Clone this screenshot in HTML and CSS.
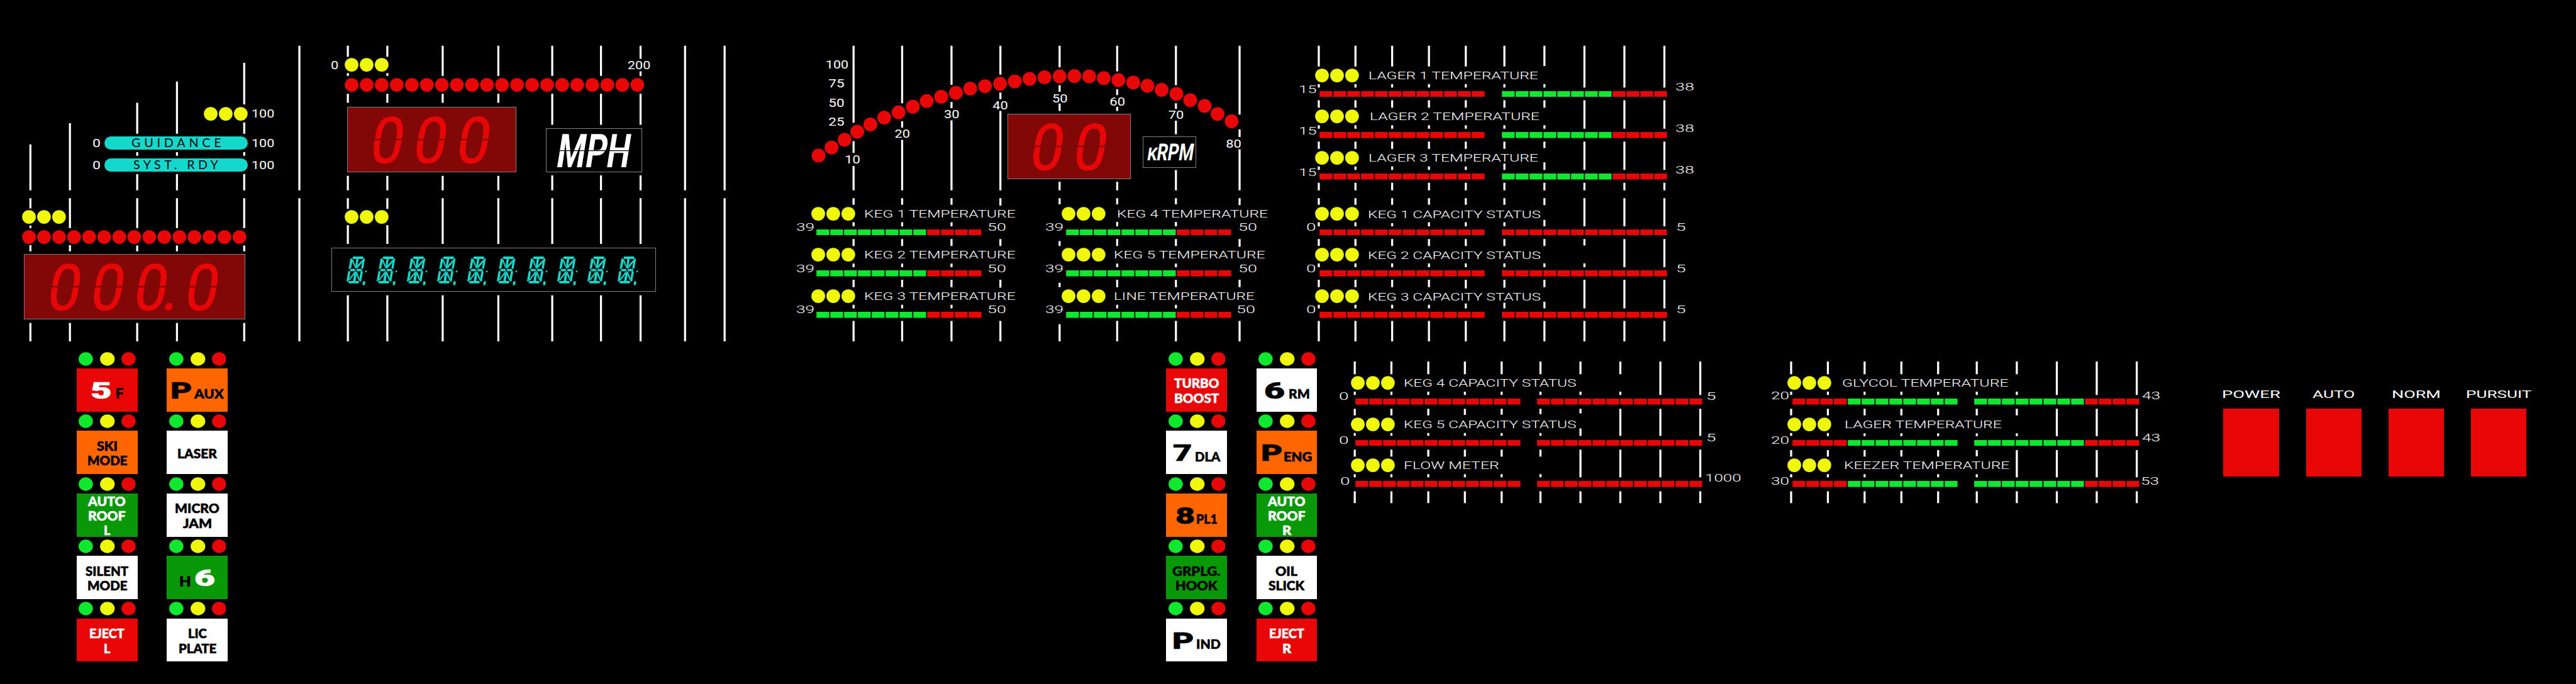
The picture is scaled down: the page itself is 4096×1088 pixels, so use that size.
FILE: index.html
```html
<!DOCTYPE html>
<html lang="en">
<head>
<meta charset="utf-8">
<title>Instrument cluster</title>
<link rel="stylesheet" href="styles.css">
</head>
<body>

<!-- Shared lamp rows, segment bars and the starburst cell -->
<svg class="defs" aria-hidden="true">
  <symbol id="lamps3" viewBox="0 0 108 34"><path class="lamp" d="M17 17H91"/></symbol>
  <symbol id="lamps15" viewBox="0 0 550 34"><path class="lamp" d="M17 17H534"/></symbol>
  <symbol id="lamps20" viewBox="0 0 735 34"><path class="lamp" d="M17 17H718"/></symbol>
  <symbol id="bar-red" viewBox="0 0 406 15"><path class="seg red" d="M0 7.5H406"/></symbol>
  <symbol id="bar-g8r4" viewBox="0 0 406 15"><path class="seg green" d="M0 7.5H270"/><path class="seg red" d="M271.8 7.5H406"/></symbol>
  <symbol id="bar-r4g8" viewBox="0 0 406 15"><path class="seg red" d="M0 7.5H134"/><path class="seg green" d="M135.9 7.5H406"/></symbol>
  <symbol id="tri" viewBox="0 0 140 34">
    <ellipse class="fill-green" cx="17.5" cy="17" rx="17.5" ry="16.5"/>
    <ellipse class="fill-yellow" cx="70.5" cy="17" rx="18" ry="16.5"/>
    <ellipse class="fill-red" cx="122.5" cy="17" rx="17.5" ry="16.5"/>
  </symbol>
  <symbol id="star" viewBox="30 57 153 216">
    <g class="star-bars">
      <path d="M72 66L80 57H150L157 66L150 75H80Z"/>
      <path d="M53 157L61 148H90L97 157L90 166H61Z"/>
      <path d="M101 157L108 148H139L146 157L139 166H108Z"/>
      <path d="M40 246L48 237H117L124 246L117 255H48Z"/>
      <path d="M67 68L76 80L64 140L53 150L46 146L58 76Z"/>
      <path d="M160 68L165 77L154 142L147 150L138 142L149 80Z"/>
      <path d="M49 161L58 170L48 230L36 243L30 236L42 168Z"/>
      <path d="M143 161L150 170L138 236L131 243L122 234L133 170Z"/>
      <path d="M102 76H119L108 132L99 152L94 132Z"/>
      <path d="M97 160L104 182L96 237H77L88 182Z"/>
      <path d="M72 82L79 80L93 120L94 146L73 96Z"/>
      <path d="M150 78L148 97L108 146L104 140L112 120Z"/>
      <path d="M92 166L88 186L50 236L49 222L84 174Z"/>
      <path d="M101 164L108 172L124 216L122 236L104 196Z"/>
      <path d="M165 168L173 159L182 166L173 175Z"/>
      <path d="M150 243L158 237L168 243L165 262L154 272L148 262Z"/>
    </g>
  </symbol>
</svg>

<main class="cluster">
<div class="upper">

  <section class="panel panel-guidance">
    <svg class="scale" viewBox="0 0 780 855"><path d="M74.5 354V466.5M74.5 486V511M74.5 553V559M74.5 601V616M74.5 792V837M171.4 302V466.5M171.4 486V559M171.4 601V616M171.4 792V837M336.2 252V328M336.2 373V382M336.2 427V466.5M336.2 486V559M336.2 602V616M336.2 792V837M433.7 200V328M433.7 373V382M433.7 427V466.5M433.7 486V559M433.7 602V616M433.7 792V837M598.5 154V256M598.5 300V328M598.5 373V382M598.5 427V466.5M598.5 486V559M598.5 602V616M598.5 792V837M733.7 112V466.5M733.7 486V837"/></svg>
    <div class="stack">
      <div class="row guide-lamps"><svg class="lamps3 yellow"><use href="#lamps3"/></svg><svg class="t num" width=".56rem"><text y="100%" textLength="100%" lengthAdjust="spacingAndGlyphs">100</text></svg></div>
      <div class="row guide-1"><svg class="t num" width=".2rem"><text y="100%" textLength="100%" lengthAdjust="spacingAndGlyphs">0</text></svg><div class="pill"><svg class="t geo" width="2.2rem"><text y="100%" textLength="100%">GUIDANCE</text></svg></div><svg class="t num" width=".56rem"><text y="100%" textLength="100%" lengthAdjust="spacingAndGlyphs">100</text></svg></div>
      <div class="row guide-2"><svg class="t num" width=".2rem"><text y="100%" textLength="100%" lengthAdjust="spacingAndGlyphs">0</text></svg><div class="pill"><svg class="t geo" width="2.08rem"><text y="100%" textLength="100%">SYST. RDY</text></svg></div><svg class="t num" width=".56rem"><text y="100%" textLength="100%" lengthAdjust="spacingAndGlyphs">100</text></svg></div>
      <svg class="lamps3 yellow trip-a"><use href="#lamps3"/></svg>
      <svg class="lamps15 red trip-b"><use href="#lamps15"/></svg>
      <svg class="led led4" viewBox="0 0 542 160"><g transform="translate(48 138) skewX(-9)"><text transform="scale(.92 1)" x="0 117.4 234.8 314 374">000.0</text></g><path d="M50 80H500"/></svg>
    </div>
  </section>

  <section class="panel panel-speed">
    <svg class="scale" viewBox="780 0 1120 855"><path d="M852.6 112V139M852.6 179V186M852.6 230V252M852.6 431V466.5M852.6 486V512M852.6 552V598M852.6 724V837M949.4 112V139M949.4 179V186M949.4 230V252M949.4 431V466.5M949.4 486V512M949.4 552V598M949.4 724V837M1085 112V186M1085 230V252M1085 431V466.5M1085 486V598M1085 724V837M1221.4 112V186M1221.4 230V252M1221.4 431V466.5M1221.4 486V598M1221.4 724V837M1353.5 112V186M1353.5 230V306M1353.5 430V466.5M1353.5 486V598M1353.5 724V837M1473 112V186M1473 230V306M1473 430V466.5M1473 486V598M1473 724V837M1570 112V144M1570 175V186M1570 230V306M1570 430V466.5M1570 486V598M1570 724V837M1679 112V466.5M1679 486V837M1776 112V466.5M1776 486V837"/></svg>
    <div class="stack">
      <div class="row speed-top"><svg class="t num" width=".19rem"><text y="100%" textLength="100%" lengthAdjust="spacingAndGlyphs">0</text></svg><svg class="lamps3 yellow"><use href="#lamps3"/></svg><svg class="t num" width=".56rem"><text y="100%" textLength="100%" lengthAdjust="spacingAndGlyphs">200</text></svg></div>
      <svg class="lamps20 red speed-lamps"><use href="#lamps20"/></svg>
      <div class="row speed-read">
        <svg class="led led3" viewBox="0 0 414 160"><g transform="translate(48 138) skewX(-9)"><text transform="scale(.92 1)" x="0 117.4 234.8">000</text></g><path d="M50 80H390"/></svg>
        <svg class="unit mph" viewBox="0 0 236 108"><g transform="translate(20 97) skewX(-9)"><text font-size="118" textLength="184" lengthAdjust="spacingAndGlyphs">MPH</text></g><path d="M20 55H220"/></svg>
      </div>
      <svg class="lamps3 yellow msg-lamps"><use href="#lamps3"/></svg>
      <div class="message">
        <svg><use href="#star"/></svg><svg><use href="#star"/></svg><svg><use href="#star"/></svg><svg><use href="#star"/></svg><svg><use href="#star"/></svg>
        <svg><use href="#star"/></svg><svg><use href="#star"/></svg><svg><use href="#star"/></svg><svg><use href="#star"/></svg><svg><use href="#star"/></svg>
      </div>
    </div>
  </section>

  <section class="panel panel-tach">
    <svg class="scale" viewBox="1900 0 1274 855">
      <path d="M2091.5 112V301M2091.5 346V375M2091.5 407V466.5M2210.5 112V253M2210.5 297V313M2210.5 343V466.5M2331.5 112V208M2331.5 250V265M2331.5 295V466.5M2451.3 112V183M2451.3 227V243M2451.3 272V466.5M2596.4 112V165M2596.4 209V225M2596.4 254V272M2596.4 446V466.5M2737.5 112V175M2737.5 219V233M2737.5 262V272M2737.5 446V466.5M2881.5 112V209M2881.5 253V267M2881.5 296V329M2881.5 417V466.5M3037.5 112V281M3037.5 317V336M3037.5 366V466.5"/>
      <path d="M2091.5 486V502M2091.5 545V555M2091.5 586V603M2091.5 646V655M2091.5 686V704M2091.5 747V756M2091.5 787V837M2210.5 486V502M2210.5 545V555M2210.5 586V603M2210.5 646V655M2210.5 686V704M2210.5 747V756M2210.5 787V837M2331.5 486V502M2331.5 545V555M2331.5 586V603M2331.5 646V655M2331.5 686V704M2331.5 747V756M2331.5 787V837M2451.3 486V504M2451.3 586V603M2451.3 686V705M2451.3 787V837M2596.4 486V501M2596.4 591V603M2596.4 693V704M2596.4 795V837M2737.5 486V501M2737.5 544V555M2737.5 586V603M2737.5 646V655M2737.5 686V704M2737.5 747V756M2737.5 787V837M2881.5 486V501M2881.5 544V555M2881.5 586V603M2881.5 646V655M2881.5 686V704M2881.5 747V756M2881.5 787V837M3037.5 486V503M3037.5 586V605M3037.5 686V704M3037.5 787V837"/>
      <path class="arc" d="M2005.7 381.5h0M2037.6 361.6h0M2069.5 342.7h0M2100.6 322.8h0M2132.6 305.3h0M2166.6 288.4h0M2201.8 275.5h0M2236.6 261.6h0M2270.6 247.6h0M2306.2 237.2h0M2342.3 227.7h0M2377.5 217.3h0M2413.6 211.3h0M2450.5 205.4h0M2486.6 199.4h0M2522.8 193.4h0M2559.4 189.4h0M2596.4 187.4h0M2632.6 186.5h0M2668.8 187.4h0M2704.5 191.4h0M2740.6 196.4h0M2776.8 202.4h0M2811.6 210.3h0M2846.4 220.3h0M2882.6 230.2h0M2916.5 245.6h0M2951.8 259.6h0M2983.5 279.5h0M3017.9 297.4h0"/>
      <g class="dial">
        <text x="2023" y="167.5" textLength="56" lengthAdjust="spacingAndGlyphs">100</text>
        <text x="2030" y="214" textLength="39" lengthAdjust="spacingAndGlyphs">75</text>
        <text x="2030" y="261.5" textLength="39" lengthAdjust="spacingAndGlyphs">50</text>
        <text x="2030" y="309" textLength="39" lengthAdjust="spacingAndGlyphs">25</text>
        <text x="2070" y="401" textLength="38" lengthAdjust="spacingAndGlyphs">10</text>
        <text x="2192" y="338" textLength="38" lengthAdjust="spacingAndGlyphs">20</text>
        <text x="2313" y="289.5" textLength="38" lengthAdjust="spacingAndGlyphs">30</text>
        <text x="2432" y="267.5" textLength="38" lengthAdjust="spacingAndGlyphs">40</text>
        <text x="2578" y="250.5" textLength="38" lengthAdjust="spacingAndGlyphs">50</text>
        <text x="2719" y="258.5" textLength="38" lengthAdjust="spacingAndGlyphs">60</text>
        <text x="2863" y="292" textLength="38" lengthAdjust="spacingAndGlyphs">70</text>
        <text x="3004" y="361.5" textLength="38" lengthAdjust="spacingAndGlyphs">80</text>
      </g>
    </svg>
    <div class="stack">
      <div class="row tach-read">
        <svg class="led led2" viewBox="0 0 302 160"><g transform="translate(48 138) skewX(-9)"><text transform="scale(.92 1)" x="0 117.4">00</text></g><path d="M50 80H290"/></svg>
        <svg class="unit krpm" viewBox="0 0 131 76"><g transform="translate(7 59) skewX(-9)"><text><tspan font-size="46" textLength="25" lengthAdjust="spacingAndGlyphs">K</tspan><tspan x="24" font-size="60" textLength="94" lengthAdjust="spacingAndGlyphs">RPM</tspan></text></g></svg>
      </div>
      <div class="gauge-cols">
        <div class="gauges keg-left">
          <div class="gauge">
            <div class="head"><svg class="lamps3 yellow"><use href="#lamps3"/></svg><svg class="t lbl" width="3.71rem"><text y="100%" textLength="100%" lengthAdjust="spacingAndGlyphs">KEG 1 TEMPERATURE</text></svg></div>
            <div class="track"><div class="min"><svg class="t lim" width=".45rem"><text y="100%" textLength="100%" lengthAdjust="spacingAndGlyphs">39</text></svg></div><svg class="bar"><use href="#bar-g8r4"/></svg><div class="max"><svg class="t lim" width=".46rem"><text y="100%" textLength="100%" lengthAdjust="spacingAndGlyphs">50</text></svg></div></div>
          </div>
          <div class="gauge">
            <div class="head"><svg class="lamps3 yellow"><use href="#lamps3"/></svg><svg class="t lbl" width="3.71rem"><text y="100%" textLength="100%" lengthAdjust="spacingAndGlyphs">KEG 2 TEMPERATURE</text></svg></div>
            <div class="track"><div class="min"><svg class="t lim" width=".45rem"><text y="100%" textLength="100%" lengthAdjust="spacingAndGlyphs">39</text></svg></div><svg class="bar"><use href="#bar-g8r4"/></svg><div class="max"><svg class="t lim" width=".46rem"><text y="100%" textLength="100%" lengthAdjust="spacingAndGlyphs">50</text></svg></div></div>
          </div>
          <div class="gauge">
            <div class="head"><svg class="lamps3 yellow"><use href="#lamps3"/></svg><svg class="t lbl" width="3.71rem"><text y="100%" textLength="100%" lengthAdjust="spacingAndGlyphs">KEG 3 TEMPERATURE</text></svg></div>
            <div class="track"><div class="min"><svg class="t lim" width=".45rem"><text y="100%" textLength="100%" lengthAdjust="spacingAndGlyphs">39</text></svg></div><svg class="bar"><use href="#bar-g8r4"/></svg><div class="max"><svg class="t lim" width=".46rem"><text y="100%" textLength="100%" lengthAdjust="spacingAndGlyphs">50</text></svg></div></div>
          </div>
        </div>
        <div class="gauges keg-right">
          <div class="gauge">
            <div class="head"><svg class="lamps3 yellow"><use href="#lamps3"/></svg><svg class="t lbl" width="3.7rem"><text y="100%" textLength="100%" lengthAdjust="spacingAndGlyphs">KEG 4 TEMPERATURE</text></svg></div>
            <div class="track"><div class="min"><svg class="t lim" width=".45rem"><text y="100%" textLength="100%" lengthAdjust="spacingAndGlyphs">39</text></svg></div><svg class="bar"><use href="#bar-g8r4"/></svg><div class="max"><svg class="t lim" width=".46rem"><text y="100%" textLength="100%" lengthAdjust="spacingAndGlyphs">50</text></svg></div></div>
          </div>
          <div class="gauge">
            <div class="head"><svg class="lamps3 yellow"><use href="#lamps3"/></svg><svg class="t lbl" width="3.71rem"><text y="100%" textLength="100%" lengthAdjust="spacingAndGlyphs">KEG 5 TEMPERATURE</text></svg></div>
            <div class="track"><div class="min"><svg class="t lim" width=".45rem"><text y="100%" textLength="100%" lengthAdjust="spacingAndGlyphs">39</text></svg></div><svg class="bar"><use href="#bar-g8r4"/></svg><div class="max"><svg class="t lim" width=".46rem"><text y="100%" textLength="100%" lengthAdjust="spacingAndGlyphs">50</text></svg></div></div>
          </div>
          <div class="gauge">
            <div class="head"><svg class="lamps3 yellow"><use href="#lamps3"/></svg><svg class="t lbl" width="3.45rem"><text y="100%" textLength="100%" lengthAdjust="spacingAndGlyphs">LINE TEMPERATURE</text></svg></div>
            <div class="track"><div class="min"><svg class="t lim" width=".45rem"><text y="100%" textLength="100%" lengthAdjust="spacingAndGlyphs">39</text></svg></div><svg class="bar"><use href="#bar-g8r4"/></svg><div class="max near"><svg class="t lim" width=".46rem"><text y="100%" textLength="100%" lengthAdjust="spacingAndGlyphs">50</text></svg></div></div>
          </div>
        </div>
      </div>
    </div>
  </section>

  <section class="panel panel-lager">
    <svg class="scale" viewBox="3174 0 1060 855">
      <path d="M3232.5 112V163M3232.5 206V214.5M3232.5 246V264M3232.5 307V315.5M3232.5 347V365M3232.5 408V416.6M3232.5 448V466.5M3322.4 112V163M3322.4 206V214.5M3322.4 246V264M3322.4 307V315.5M3322.4 347V365M3322.4 408V416.6M3322.4 448V466.5M3412.3 112V163M3412.3 206V214.5M3412.3 246V264M3412.3 307V315.5M3412.3 347V365M3412.3 408V416.6M3412.3 448V466.5M3502.5 112V163M3502.5 206V214.5M3502.5 246V264M3502.5 307V315.5M3502.5 347V365M3502.5 408V416.6M3502.5 448V466.5M3592.8 112V163M3592.8 206V214.5M3592.8 246V264M3592.8 307V315.5M3592.8 347V365M3592.8 408V416.6M3592.8 448V466.5M3687.4 112V163M3687.4 206V214.5M3687.4 246V264M3687.4 307V315.5M3687.4 347V365M3687.4 401V416.6M3687.4 448V466.5M3785.5 112V162M3785.5 206V214.5M3785.5 246V264M3785.5 307V315.5M3785.5 347V363M3785.5 398V416.6M3785.5 448V466.5M3883.5 112V214.5M3883.5 246V315.5M3883.5 347V416.6M3883.5 448V466.5M3981.5 112V214.5M3981.5 246V315.5M3981.5 347V416.6M3981.5 448V466.5M4079.5 112V214.5M4079.5 246V315.5M4079.5 347V416.6M4079.5 448V466.5"/>
      <path d="M3232.5 486V502M3232.5 545V555M3232.5 586V603M3232.5 646V655M3232.5 686V704M3232.5 747V756M3232.5 787V837M3322.4 486V502M3322.4 545V555M3322.4 586V603M3322.4 646V655M3322.4 686V704M3322.4 747V756M3322.4 787V837M3412.3 486V502M3412.3 547V555M3412.3 586V603M3412.3 646V655M3412.3 686V704M3412.3 747V756M3412.3 787V837M3502.5 486V502M3502.5 545V555M3502.5 586V603M3502.5 646V655M3502.5 686V704M3502.5 747V756M3502.5 787V837M3592.8 486V502M3592.8 545V555M3592.8 586V603M3592.8 646V655M3592.8 686V707M3592.8 744V756M3592.8 787V837M3687.4 486V502M3687.4 545V555M3687.4 586V603M3687.4 646V655M3687.4 686V705M3687.4 742V756M3687.4 787V837M3785.5 486V503M3785.5 539V555M3785.5 586V603M3785.5 646V655M3785.5 686V704M3785.5 740V756M3785.5 787V837M3883.5 486V555M3883.5 586V602M3883.5 646V655M3883.5 686V756M3883.5 787V837M3981.5 486V555M3981.5 586V655M3981.5 686V756M3981.5 787V837M4079.5 486V555M4079.5 586V655M4079.5 686V756M4079.5 787V837"/>
    </svg>
    <div class="stack">
      <div class="gauges lager">
        <div class="gauge">
          <div class="head"><svg class="lamps3 yellow"><use href="#lamps3"/></svg><svg class="t lbl" width="4.16rem"><text y="100%" textLength="100%" lengthAdjust="spacingAndGlyphs">LAGER 1 TEMPERATURE</text></svg></div>
          <div class="track"><div class="min"><svg class="t lim" width=".44rem"><text y="100%" textLength="100%" lengthAdjust="spacingAndGlyphs">15</text></svg></div><svg class="bar"><use href="#bar-red"/></svg><svg class="bar second"><use href="#bar-g8r4"/></svg><div class="max"><svg class="t lim" width=".46rem"><text y="100%" textLength="100%" lengthAdjust="spacingAndGlyphs">38</text></svg></div></div>
        </div>
        <div class="gauge">
          <div class="head"><svg class="lamps3 yellow"><use href="#lamps3"/></svg><svg class="t lbl" width="4.16rem"><text y="100%" textLength="100%" lengthAdjust="spacingAndGlyphs">LAGER 2 TEMPERATURE</text></svg></div>
          <div class="track"><div class="min"><svg class="t lim" width=".44rem"><text y="100%" textLength="100%" lengthAdjust="spacingAndGlyphs">15</text></svg></div><svg class="bar"><use href="#bar-red"/></svg><svg class="bar second"><use href="#bar-g8r4"/></svg><div class="max"><svg class="t lim" width=".46rem"><text y="100%" textLength="100%" lengthAdjust="spacingAndGlyphs">38</text></svg></div></div>
        </div>
        <div class="gauge">
          <div class="head"><svg class="lamps3 yellow"><use href="#lamps3"/></svg><svg class="t lbl" width="4.16rem"><text y="100%" textLength="100%" lengthAdjust="spacingAndGlyphs">LAGER 3 TEMPERATURE</text></svg></div>
          <div class="track"><div class="min"><svg class="t lim" width=".44rem"><text y="100%" textLength="100%" lengthAdjust="spacingAndGlyphs">15</text></svg></div><svg class="bar"><use href="#bar-red"/></svg><svg class="bar second"><use href="#bar-g8r4"/></svg><div class="max"><svg class="t lim" width=".46rem"><text y="100%" textLength="100%" lengthAdjust="spacingAndGlyphs">38</text></svg></div></div>
        </div>
      </div>
      <div class="gauges capacity">
        <div class="gauge">
          <div class="head"><svg class="lamps3 yellow"><use href="#lamps3"/></svg><svg class="t lbl" width="4.24rem"><text y="100%" textLength="100%" lengthAdjust="spacingAndGlyphs">KEG 1 CAPACITY STATUS</text></svg></div>
          <div class="track"><div class="min"><svg class="t lim" width=".24rem"><text y="100%" textLength="100%" lengthAdjust="spacingAndGlyphs">0</text></svg></div><svg class="bar"><use href="#bar-red"/></svg><svg class="bar second"><use href="#bar-red"/></svg><div class="max"><svg class="t lim" width=".24rem"><text y="100%" textLength="100%" lengthAdjust="spacingAndGlyphs">5</text></svg></div></div>
        </div>
        <div class="gauge">
          <div class="head"><svg class="lamps3 yellow"><use href="#lamps3"/></svg><svg class="t lbl" width="4.24rem"><text y="100%" textLength="100%" lengthAdjust="spacingAndGlyphs">KEG 2 CAPACITY STATUS</text></svg></div>
          <div class="track"><div class="min"><svg class="t lim" width=".24rem"><text y="100%" textLength="100%" lengthAdjust="spacingAndGlyphs">0</text></svg></div><svg class="bar"><use href="#bar-red"/></svg><svg class="bar second"><use href="#bar-red"/></svg><div class="max"><svg class="t lim" width=".24rem"><text y="100%" textLength="100%" lengthAdjust="spacingAndGlyphs">5</text></svg></div></div>
        </div>
        <div class="gauge">
          <div class="head"><svg class="lamps3 yellow"><use href="#lamps3"/></svg><svg class="t lbl" width="4.24rem"><text y="100%" textLength="100%" lengthAdjust="spacingAndGlyphs">KEG 3 CAPACITY STATUS</text></svg></div>
          <div class="track"><div class="min"><svg class="t lim" width=".24rem"><text y="100%" textLength="100%" lengthAdjust="spacingAndGlyphs">0</text></svg></div><svg class="bar"><use href="#bar-red"/></svg><svg class="bar second"><use href="#bar-red"/></svg><div class="max"><svg class="t lim" width=".24rem"><text y="100%" textLength="100%" lengthAdjust="spacingAndGlyphs">5</text></svg></div></div>
        </div>
      </div>
    </div>
  </section>
</div>

<div class="lower">

  <section class="pad pad-left">
    <div class="key"><svg class="tri"><use href="#tri"/></svg><div class="tile bg-red"><div class="pair"><svg class="t huge white" width=".52rem"><text y="100%" textLength="100%" lengthAdjust="spacingAndGlyphs">5</text></svg><svg class="t mid gap-10" width=".19rem"><text y="100%" textLength="100%" lengthAdjust="spacingAndGlyphs">F</text></svg></div></div></div>
    <div class="key"><svg class="tri"><use href="#tri"/></svg><div class="tile bg-orange"><div class="pair"><svg class="t huge" width=".53rem"><text y="100%" textLength="100%" lengthAdjust="spacingAndGlyphs">P</text></svg><svg class="t word gap-6" width=".72rem"><text y="100%" textLength="100%" lengthAdjust="spacingAndGlyphs">AUX</text></svg></div></div></div>
    <div class="key"><svg class="tri"><use href="#tri"/></svg><div class="tile bg-orange"><svg class="t word" width=".51rem"><text y="100%" textLength="100%" lengthAdjust="spacingAndGlyphs">SKI</text></svg><svg class="t word" width=".98rem"><text y="100%" textLength="100%" lengthAdjust="spacingAndGlyphs">MODE</text></svg></div></div>
    <div class="key"><svg class="tri"><use href="#tri"/></svg><div class="tile bg-white"><svg class="t word" width=".97rem"><text y="100%" textLength="100%" lengthAdjust="spacingAndGlyphs">LASER</text></svg></div></div>
    <div class="key"><svg class="tri"><use href="#tri"/></svg><div class="tile bg-green white"><svg class="t word" width=".92rem"><text y="100%" textLength="100%" lengthAdjust="spacingAndGlyphs">AUTO</text></svg><svg class="t word" width=".92rem"><text y="100%" textLength="100%" lengthAdjust="spacingAndGlyphs">ROOF</text></svg><svg class="t word" width=".16rem"><text y="100%" textLength="100%" lengthAdjust="spacingAndGlyphs">L</text></svg></div></div>
    <div class="key"><svg class="tri"><use href="#tri"/></svg><div class="tile bg-white"><svg class="t word" width="1.09rem"><text y="100%" textLength="100%" lengthAdjust="spacingAndGlyphs">MICRO</text></svg><svg class="t word" width=".71rem"><text y="100%" textLength="100%" lengthAdjust="spacingAndGlyphs">JAM</text></svg></div></div>
    <div class="key"><svg class="tri"><use href="#tri"/></svg><div class="tile bg-white"><svg class="t word" width="1.05rem"><text y="100%" textLength="100%" lengthAdjust="spacingAndGlyphs">SILENT</text></svg><svg class="t word" width=".98rem"><text y="100%" textLength="100%" lengthAdjust="spacingAndGlyphs">MODE</text></svg></div></div>
    <div class="key"><svg class="tri"><use href="#tri"/></svg><div class="tile bg-green"><div class="pair"><svg class="t mid" width=".29rem"><text y="100%" textLength="100%" lengthAdjust="spacingAndGlyphs">H</text></svg><svg class="t huge white gap-10" width=".51rem"><text y="100%" textLength="100%" lengthAdjust="spacingAndGlyphs">6</text></svg></div></div></div>
    <div class="key"><svg class="tri"><use href="#tri"/></svg><div class="tile bg-red white"><svg class="t word" width=".86rem"><text y="100%" textLength="100%" lengthAdjust="spacingAndGlyphs">EJECT</text></svg><svg class="t word" width=".16rem"><text y="100%" textLength="100%" lengthAdjust="spacingAndGlyphs">L</text></svg></div></div>
    <div class="key"><svg class="tri"><use href="#tri"/></svg><div class="tile bg-white"><svg class="t word" width=".46rem"><text y="100%" textLength="100%" lengthAdjust="spacingAndGlyphs">LIC</text></svg><svg class="t word" width=".93rem"><text y="100%" textLength="100%" lengthAdjust="spacingAndGlyphs">PLATE</text></svg></div></div>
  </section>

  <section class="pad pad-right">
    <div class="key"><svg class="tri"><use href="#tri"/></svg><div class="tile bg-red white"><svg class="t word" width="1.1rem"><text y="100%" textLength="100%" lengthAdjust="spacingAndGlyphs">TURBO</text></svg><svg class="t word" width="1.1rem"><text y="100%" textLength="100%" lengthAdjust="spacingAndGlyphs">BOOST</text></svg></div></div>
    <div class="key"><svg class="tri"><use href="#tri"/></svg><div class="tile bg-white"><div class="pair"><svg class="t huge" width=".51rem"><text y="100%" textLength="100%" lengthAdjust="spacingAndGlyphs">6</text></svg><svg class="t word gap-10" width=".52rem"><text y="100%" textLength="100%" lengthAdjust="spacingAndGlyphs">RM</text></svg></div></div></div>
    <div class="key"><svg class="tri"><use href="#tri"/></svg><div class="tile bg-white"><div class="pair"><svg class="t huge" width=".47rem"><text y="100%" textLength="100%" lengthAdjust="spacingAndGlyphs">7</text></svg><svg class="t word gap-6" width=".62rem"><text y="100%" textLength="100%" lengthAdjust="spacingAndGlyphs">DLA</text></svg></div></div></div>
    <div class="key"><svg class="tri"><use href="#tri"/></svg><div class="tile bg-orange"><div class="pair"><svg class="t huge" width=".53rem"><text y="100%" textLength="100%" lengthAdjust="spacingAndGlyphs">P</text></svg><svg class="t word gap-3" width=".7rem"><text y="100%" textLength="100%" lengthAdjust="spacingAndGlyphs">ENG</text></svg></div></div></div>
    <div class="key"><svg class="tri"><use href="#tri"/></svg><div class="tile bg-orange"><div class="pair"><svg class="t huge" width=".48rem"><text y="100%" textLength="100%" lengthAdjust="spacingAndGlyphs">8</text></svg><svg class="t word gap-3" width=".52rem"><text y="100%" textLength="100%" lengthAdjust="spacingAndGlyphs">PL1</text></svg></div></div></div>
    <div class="key"><svg class="tri"><use href="#tri"/></svg><div class="tile bg-green white"><svg class="t word" width=".92rem"><text y="100%" textLength="100%" lengthAdjust="spacingAndGlyphs">AUTO</text></svg><svg class="t word" width=".92rem"><text y="100%" textLength="100%" lengthAdjust="spacingAndGlyphs">ROOF</text></svg><svg class="t word" width=".22rem"><text y="100%" textLength="100%" lengthAdjust="spacingAndGlyphs">R</text></svg></div></div>
    <div class="key"><svg class="tri"><use href="#tri"/></svg><div class="tile bg-green"><svg class="t word" width="1.18rem"><text y="100%" textLength="100%" lengthAdjust="spacingAndGlyphs">GRPLG.</text></svg><svg class="t word" width="1.03rem"><text y="100%" textLength="100%" lengthAdjust="spacingAndGlyphs">HOOK</text></svg></div></div>
    <div class="key"><svg class="tri"><use href="#tri"/></svg><div class="tile bg-white"><svg class="t word" width=".54rem"><text y="100%" textLength="100%" lengthAdjust="spacingAndGlyphs">OIL</text></svg><svg class="t word" width=".88rem"><text y="100%" textLength="100%" lengthAdjust="spacingAndGlyphs">SLICK</text></svg></div></div>
    <div class="key"><svg class="tri"><use href="#tri"/></svg><div class="tile bg-white"><div class="pair"><svg class="t huge" width=".53rem"><text y="100%" textLength="100%" lengthAdjust="spacingAndGlyphs">P</text></svg><svg class="t word gap-6" width=".6rem"><text y="100%" textLength="100%" lengthAdjust="spacingAndGlyphs">IND</text></svg></div></div></div>
    <div class="key"><svg class="tri"><use href="#tri"/></svg><div class="tile bg-red white"><svg class="t word" width=".86rem"><text y="100%" textLength="100%" lengthAdjust="spacingAndGlyphs">EJECT</text></svg><svg class="t word" width=".22rem"><text y="100%" textLength="100%" lengthAdjust="spacingAndGlyphs">R</text></svg></div></div>
  </section>

  <section class="panel panel-flow">
    <svg class="scale" viewBox="3250 855 1050 400"><path d="M3319.6 886V917M3319.6 960V968M3319.6 1002V1018M3319.6 1061V1068M3319.6 1102V1119M3319.6 1162V1170M3319.6 1204V1233M3409.4 886V917M3409.4 960V968M3409.4 1002V1018M3409.4 1061V1068M3409.4 1102V1119M3409.4 1162V1170M3409.4 1204V1233M3499.8 886V917M3499.8 960V968M3499.8 1002V1018M3499.8 1061V1068M3499.8 1102V1119M3499.8 1162V1170M3499.8 1204V1233M3589.5 886V917M3589.5 960V968M3589.5 1002V1017M3589.5 1061V1068M3589.5 1102V1119M3589.5 1162V1170M3589.5 1204V1233M3679.6 886V917M3679.6 960V968M3679.6 1002V1016M3679.6 1061V1068M3679.6 1102V1119M3679.6 1162V1170M3679.6 1204V1233M3774.7 886V917M3774.7 960V968M3774.7 1002V1015M3774.7 1061V1068M3774.7 1102V1119M3774.7 1162V1170M3774.7 1204V1233M3872.8 886V917M3872.8 960V968M3872.8 1002V1013M3872.8 1050V1068M3872.8 1102V1170M3872.8 1204V1233M3970.5 886V917M3970.5 960V968M3970.5 1002V1068M3970.5 1102V1170M3970.5 1204V1233M4068.6 886V968M4068.6 1002V1068M4068.6 1102V1170M4068.6 1204V1233M4166.4 886V968M4166.4 1002V1068M4166.4 1102V1170M4166.4 1204V1233"/></svg>
    <div class="stack">
      <div class="gauges flow">
        <div class="gauge">
          <div class="head"><svg class="lamps3 yellow"><use href="#lamps3"/></svg><svg class="t lbl" width="4.23rem"><text y="100%" textLength="100%" lengthAdjust="spacingAndGlyphs">KEG 4 CAPACITY STATUS</text></svg></div>
          <div class="track"><div class="min"><svg class="t lim" width=".24rem"><text y="100%" textLength="100%" lengthAdjust="spacingAndGlyphs">0</text></svg></div><svg class="bar"><use href="#bar-red"/></svg><svg class="bar second"><use href="#bar-red"/></svg><div class="max"><svg class="t lim" width=".24rem"><text y="100%" textLength="100%" lengthAdjust="spacingAndGlyphs">5</text></svg></div></div>
        </div>
        <div class="gauge">
          <div class="head"><svg class="lamps3 yellow"><use href="#lamps3"/></svg><svg class="t lbl" width="4.23rem"><text y="100%" textLength="100%" lengthAdjust="spacingAndGlyphs">KEG 5 CAPACITY STATUS</text></svg></div>
          <div class="track"><div class="min low"><svg class="t lim" width=".24rem"><text y="100%" textLength="100%" lengthAdjust="spacingAndGlyphs">0</text></svg></div><svg class="bar"><use href="#bar-red"/></svg><svg class="bar second"><use href="#bar-red"/></svg><div class="max"><svg class="t lim" width=".24rem"><text y="100%" textLength="100%" lengthAdjust="spacingAndGlyphs">5</text></svg></div></div>
        </div>
        <div class="gauge">
          <div class="head"><svg class="lamps3 yellow"><use href="#lamps3"/></svg><svg class="t lbl" width="2.34rem"><text y="100%" textLength="100%" lengthAdjust="spacingAndGlyphs">FLOW METER</text></svg></div>
          <div class="track"><div class="min low near"><svg class="t lim" width=".24rem"><text y="100%" textLength="100%" lengthAdjust="spacingAndGlyphs">0</text></svg></div><svg class="bar"><use href="#bar-red"/></svg><svg class="bar second"><use href="#bar-red"/></svg><div class="max high near"><svg class="t lim" width=".89rem"><text y="100%" textLength="100%" lengthAdjust="spacingAndGlyphs">1000</text></svg></div></div>
        </div>
      </div>
    </div>
  </section>

  <section class="panel panel-glycol">
    <svg class="scale" viewBox="4300 855 1050 400"><path d="M4389.4 886V917M4389.4 960V968M4389.4 1002V1018M4389.4 1061V1068M4389.4 1103V1119M4389.4 1162V1170M4389.4 1204V1233M4479.5 886V917M4479.5 960V968M4479.5 1002V1018M4479.5 1061V1069M4479.5 1103V1119M4479.5 1162V1170M4479.5 1204V1233M4569.5 886V917M4569.5 960V968M4569.5 1002V1018M4569.5 1062V1069M4569.5 1103V1119M4569.5 1162V1170M4569.5 1204V1233M4659.6 886V917M4659.6 960V968M4659.6 1002V1018M4659.6 1062V1069M4659.6 1103V1119M4659.6 1162V1170M4659.6 1204V1233M4749.7 886V917M4749.7 960V968M4749.7 1002V1018M4749.7 1062V1069M4749.7 1103V1119M4749.7 1162V1170M4749.7 1204V1233M4844.4 886V917M4844.4 960V968M4844.4 1002V1018M4844.4 1062V1069M4844.4 1103V1118M4844.4 1162V1170M4844.4 1204V1233M4942.5 886V917M4942.5 960V968M4942.5 1002V1018M4942.5 1062V1069M4942.5 1103V1170M4942.5 1204V1233M5040.6 886V968M5040.6 1002V1069M5040.6 1103V1170M5040.6 1204V1233M5138.4 886V968M5138.4 1002V1069M5138.4 1103V1170M5138.4 1204V1233M5236.5 886V968M5236.5 1002V1069M5236.5 1103V1170M5236.5 1204V1233"/></svg>
    <div class="stack">
      <div class="gauges glycol">
        <div class="gauge">
          <div class="head"><svg class="lamps3 yellow"><use href="#lamps3"/></svg><svg class="t lbl" width="4.08rem"><text y="100%" textLength="100%" lengthAdjust="spacingAndGlyphs">GLYCOL TEMPERATURE</text></svg></div>
          <div class="track"><div class="min high"><svg class="t lim" width=".45rem"><text y="100%" textLength="100%" lengthAdjust="spacingAndGlyphs">20</text></svg></div><svg class="bar"><use href="#bar-r4g8"/></svg><svg class="bar second"><use href="#bar-g8r4"/></svg><div class="max high"><svg class="t lim" width=".45rem"><text y="100%" textLength="100%" lengthAdjust="spacingAndGlyphs">43</text></svg></div></div>
        </div>
        <div class="gauge">
          <div class="head"><svg class="lamps3 yellow"><use href="#lamps3"/></svg><svg class="t lbl" width="3.85rem"><text y="100%" textLength="100%" lengthAdjust="spacingAndGlyphs">LAGER TEMPERATURE</text></svg></div>
          <div class="track"><div class="min low"><svg class="t lim" width=".45rem"><text y="100%" textLength="100%" lengthAdjust="spacingAndGlyphs">20</text></svg></div><svg class="bar"><use href="#bar-r4g8"/></svg><svg class="bar second"><use href="#bar-g8r4"/></svg><div class="max"><svg class="t lim" width=".45rem"><text y="100%" textLength="100%" lengthAdjust="spacingAndGlyphs">43</text></svg></div></div>
        </div>
        <div class="gauge">
          <div class="head"><svg class="lamps3 yellow"><use href="#lamps3"/></svg><svg class="t lbl" width="4.06rem"><text y="100%" textLength="100%" lengthAdjust="spacingAndGlyphs">KEEZER TEMPERATURE</text></svg></div>
          <div class="track"><div class="min low"><svg class="t lim" width=".45rem"><text y="100%" textLength="100%" lengthAdjust="spacingAndGlyphs">30</text></svg></div><svg class="bar"><use href="#bar-r4g8"/></svg><svg class="bar second"><use href="#bar-g8r4"/></svg><div class="max low near"><svg class="t lim" width=".45rem"><text y="100%" textLength="100%" lengthAdjust="spacingAndGlyphs">53</text></svg></div></div>
        </div>
      </div>
    </div>
  </section>

  <section class="modes">
    <div class="mode"><svg class="t name" width="1.43rem"><text y="100%" textLength="100%" lengthAdjust="spacingAndGlyphs">POWER</text></svg><div class="lens"></div></div>
    <div class="mode"><svg class="t name" width="1.04rem"><text y="100%" textLength="100%" lengthAdjust="spacingAndGlyphs">AUTO</text></svg><div class="lens"></div></div>
    <div class="mode"><svg class="t name" width="1.2rem"><text y="100%" textLength="100%" lengthAdjust="spacingAndGlyphs">NORM</text></svg><div class="lens"></div></div>
    <div class="mode"><svg class="t name" width="1.61rem"><text y="100%" textLength="100%" lengthAdjust="spacingAndGlyphs">PURSUIT</text></svg><div class="lens"></div></div>
  </section>
</div>
</main>
</body>
</html>
```

FILE: styles.css
```css
:root {
  --red: #e80707;
  --yellow: #eff70a;
  --green: #0fe82f;
  --cyan: #14d8cc;
  --led: #820808;
  --frame: #808080;
  font-size: calc(100vw / 63.13);
}

* { box-sizing: border-box; }

body {
  margin: 0;
  background: #000;
  color: #fff;
  font-family: Roboto, "Liberation Sans", sans-serif;
  overflow: hidden;
}

svg { display: block; flex: none; fill: currentColor; }
.defs { width: 0; height: 0; position: absolute; }

.red { color: var(--red); }
.yellow { color: var(--yellow); }
.green { color: var(--green); }
.fill-red { fill: var(--red); }
.fill-yellow { fill: var(--yellow); }
.fill-green { fill: var(--green); }

/* Lamps and bar segments are dashed strokes */
.lamp {
  fill: none;
  stroke: currentColor;
  stroke-width: 33.6;
  stroke-linecap: round;
  stroke-dasharray: 0 36.87;
}
.seg {
  fill: none;
  stroke: currentColor;
  stroke-width: 15;
  stroke-dasharray: 31.3 2.67;
}
.lamps3 { width: 1.08rem; height: .34rem; }
.lamps15 { width: 5.5rem; height: .34rem; }
.lamps20 { width: 7.35rem; height: .34rem; }

/* Text fitted to the width of its box; the box is one cap height tall */
.t { overflow: visible; height: .19rem; font-size: .262rem; }
.num { height: .2rem; font-size: .282rem; }
.lbl { height: .185rem; font-size: .26rem; font-weight: 300; }
.lim { height: .185rem; font-size: .26rem; font-weight: 300; }
.geo { height: .22rem; font-size: .305rem; font-family: Lato, sans-serif; }
.word {
  height: .23rem;
  font-size: .32rem;
  font-family: Lato, sans-serif;
  font-weight: 900;
  stroke: currentColor;
  stroke-width: .01rem;
}
.mid { height: .27rem; font-size: .38rem; font-weight: 900; }
.huge { height: .405rem; font-size: .57rem; font-weight: 900; stroke: currentColor; stroke-width: .01rem; }
.name { height: .19rem; font-size: .267rem; }
.white { color: #fff; }

/* Page bands and panels */
.upper { display: flex; height: 8.55rem; }
.lower { display: flex; height: 8.22rem; align-items: flex-start; }
.panel { display: grid; flex: none; }
.scale, .stack { grid-area: 1 / 1; }
.scale path { fill: none; stroke: #fff; stroke-width: 5; }
.stack { display: flex; flex-direction: column; align-items: flex-start; }
.row { display: flex; align-items: center; }

.panel-guidance { width: 7.8rem; }
.panel-guidance .stack { padding-top: 2.62rem; }
.guide-lamps { margin-left: 4.99rem; gap: .09rem; height: .33rem; }
.guide-1, .guide-2 { margin-left: 2.26rem; gap: .1rem; height: .33rem; }
.guide-1 { margin-top: .39rem; }
.guide-2 { margin-top: .21rem; }
.pill {
  display: flex;
  align-items: center;
  justify-content: center;
  width: 3.51rem;
  height: .33rem;
  border-radius: .165rem;
  background: var(--cyan);
  color: #000;
}
.trip-a { margin: .94rem 0 0 .545rem; }
.trip-b { margin: .15rem 0 0 .545rem; }

/* Readouts */
.led {
  height: 1.6rem;
  overflow: visible;
  border: .02rem solid var(--frame);
  background: var(--led);
  color: var(--red);
}
.led text { font-size: 160px; stroke: currentColor; stroke-width: 1.5; }
.led path { fill: none; stroke: var(--led); stroke-width: 4; }
.led4 { width: 5.42rem; margin: .25rem 0 0 .59rem; }
.led3 { width: 4.14rem; }
.led2 { width: 3.02rem; }
.unit { overflow: visible; border: .02rem solid var(--frame); background: #000; font-weight: 700; }
.unit path { fill: none; stroke: #000; stroke-width: 2; }
.mph { width: 2.36rem; height: 1.08rem; }
.krpm { width: 1.31rem; height: .76rem; }

.panel-speed { width: 11.2rem; }
.panel-speed .stack { padding-top: 1.42rem; }
.speed-top { margin-left: .31rem; }
.speed-top .lamps3 { margin: 0 5.86rem 0 .15rem; }
.speed-lamps { margin: .15rem 0 0 .65rem; }
.speed-read { margin: .37rem 0 0 .71rem; gap: .73rem; align-items: flex-end; }
.msg-lamps { margin: .93rem 0 0 .65rem; }
.message {
  display: flex;
  gap: .228rem;
  width: 7.96rem;
  height: 1.08rem;
  margin: .58rem 0 0 .32rem;
  padding: .2rem 0 0 .36rem;
  border: .02rem solid var(--frame);
  background: #000;
  color: var(--cyan);
}
.message svg { width: .51rem; height: .72rem; }

.panel-tach { width: 12.74rem; }
.panel-tach .stack { padding-top: 2.79rem; }
.scale .arc { stroke: var(--red); stroke-width: 33.8; stroke-linecap: round; }
.dial { font-size: 28.5px; }
.tach-read { margin-left: 5.69rem; gap: .3rem; }
.krpm { margin-top: .28rem; }
.gauge-cols { display: flex; margin: .68rem 0 0 .4rem; }
.keg-left { width: 6.13rem; }

/* Gauges */
.gauge { height: 1.012rem; }
.head { display: flex; align-items: center; height: .33rem; margin-left: .49rem; }
.head .lbl { margin-left: var(--label-gap); }
.track { display: flex; align-items: flex-start; margin-top: .05rem; }
.min {
  display: flex;
  justify-content: flex-end;
  width: .6rem;
  margin-top: .02rem;
  padding-right: var(--min-gap);
}
.max { margin: .02rem 0 0 var(--max-gap); }
.bar { width: 4.06rem; height: .15rem; margin-top: .17rem; }
.second { margin-left: .4rem; }
.low { margin-top: .08rem; }
.high { margin-top: 0; }

.keg-left { --label-gap: .21rem; --min-gap: .03rem; --max-gap: .14rem; }
.keg-right { --label-gap: .19rem; --min-gap: .06rem; --max-gap: .16rem; }
.keg-right .gauge:first-child { --label-gap: .28rem; }
.keg-right .near { --max-gap: .11rem; }

.panel-lager { width: 10.6rem; }
.panel-lager .stack { padding-top: 1.68rem; }
.lager { --label-gap: .23rem; --min-gap: .07rem; --max-gap: .2rem; }
.lager .gauge:nth-child(2) { --label-gap: .26rem; }
.lager .min { margin-top: .04rem; }
.lager .max { margin-top: -.02rem; }
.capacity { margin-top: .354rem; --label-gap: .22rem; --min-gap: .09rem; --max-gap: .21rem; }
.capacity .head .lbl { margin-top: .03rem; }

.panel-flow { width: 10.5rem; height: 4rem; }
.panel-flow .stack { padding: .67rem 0 0 .11rem; }
.flow { --label-gap: .22rem; --min-gap: .16rem; --max-gap: .09rem; }
.flow .near { --min-gap: .12rem; --max-gap: .05rem; }

.panel-glycol { width: 10.5rem; height: 4rem; }
.panel-glycol .stack { padding: .67rem 0 0 .32rem; }
.glycol { --label-gap: .26rem; --min-gap: .07rem; --max-gap: .06rem; }
.glycol .gauge:nth-child(2) { --label-gap: .32rem; }
.glycol .gauge:nth-child(3) { --label-gap: .3rem; }
.glycol .near { --max-gap: .03rem; }

/* Function keys */
.pad {
  display: grid;
  grid-template-columns: 1.49rem 1.49rem;
  column-gap: .72rem;
  grid-auto-rows: 1.533rem;
  flex: none;
  padding-top: .075rem;
}
.pad-left { margin-left: 1.88rem; }
.pad-right { margin: 0 .22rem 0 23rem; }
.tri { width: 1.4rem; height: .34rem; margin: 0 0 .065rem .05rem; }
.tile {
  display: flex;
  flex-direction: column;
  align-items: center;
  justify-content: center;
  gap: .13rem;
  height: 1.06rem;
  padding-top: .04rem;
  color: #000;
}
.tile.white { color: #fff; }
.bg-red { background: var(--red); }
.bg-orange { background: #ff6600; }
.bg-green { background: #089808; }
.bg-white { background: #fff; }
.pair { display: flex; align-items: flex-end; margin-top: -.02rem; }
.gap-3 { margin-left: .03rem; }
.gap-6 { margin-left: .06rem; }
.gap-10 { margin-left: .09rem; }

/* Mode lenses */
.modes { display: flex; padding: 1.02rem 0 0 .66rem; }
.mode { display: flex; flex-direction: column; align-items: center; width: 2.022rem; flex: none; }
.mode .lens { width: 1.36rem; height: 1.67rem; margin-top: .26rem; background: var(--red); }
```
